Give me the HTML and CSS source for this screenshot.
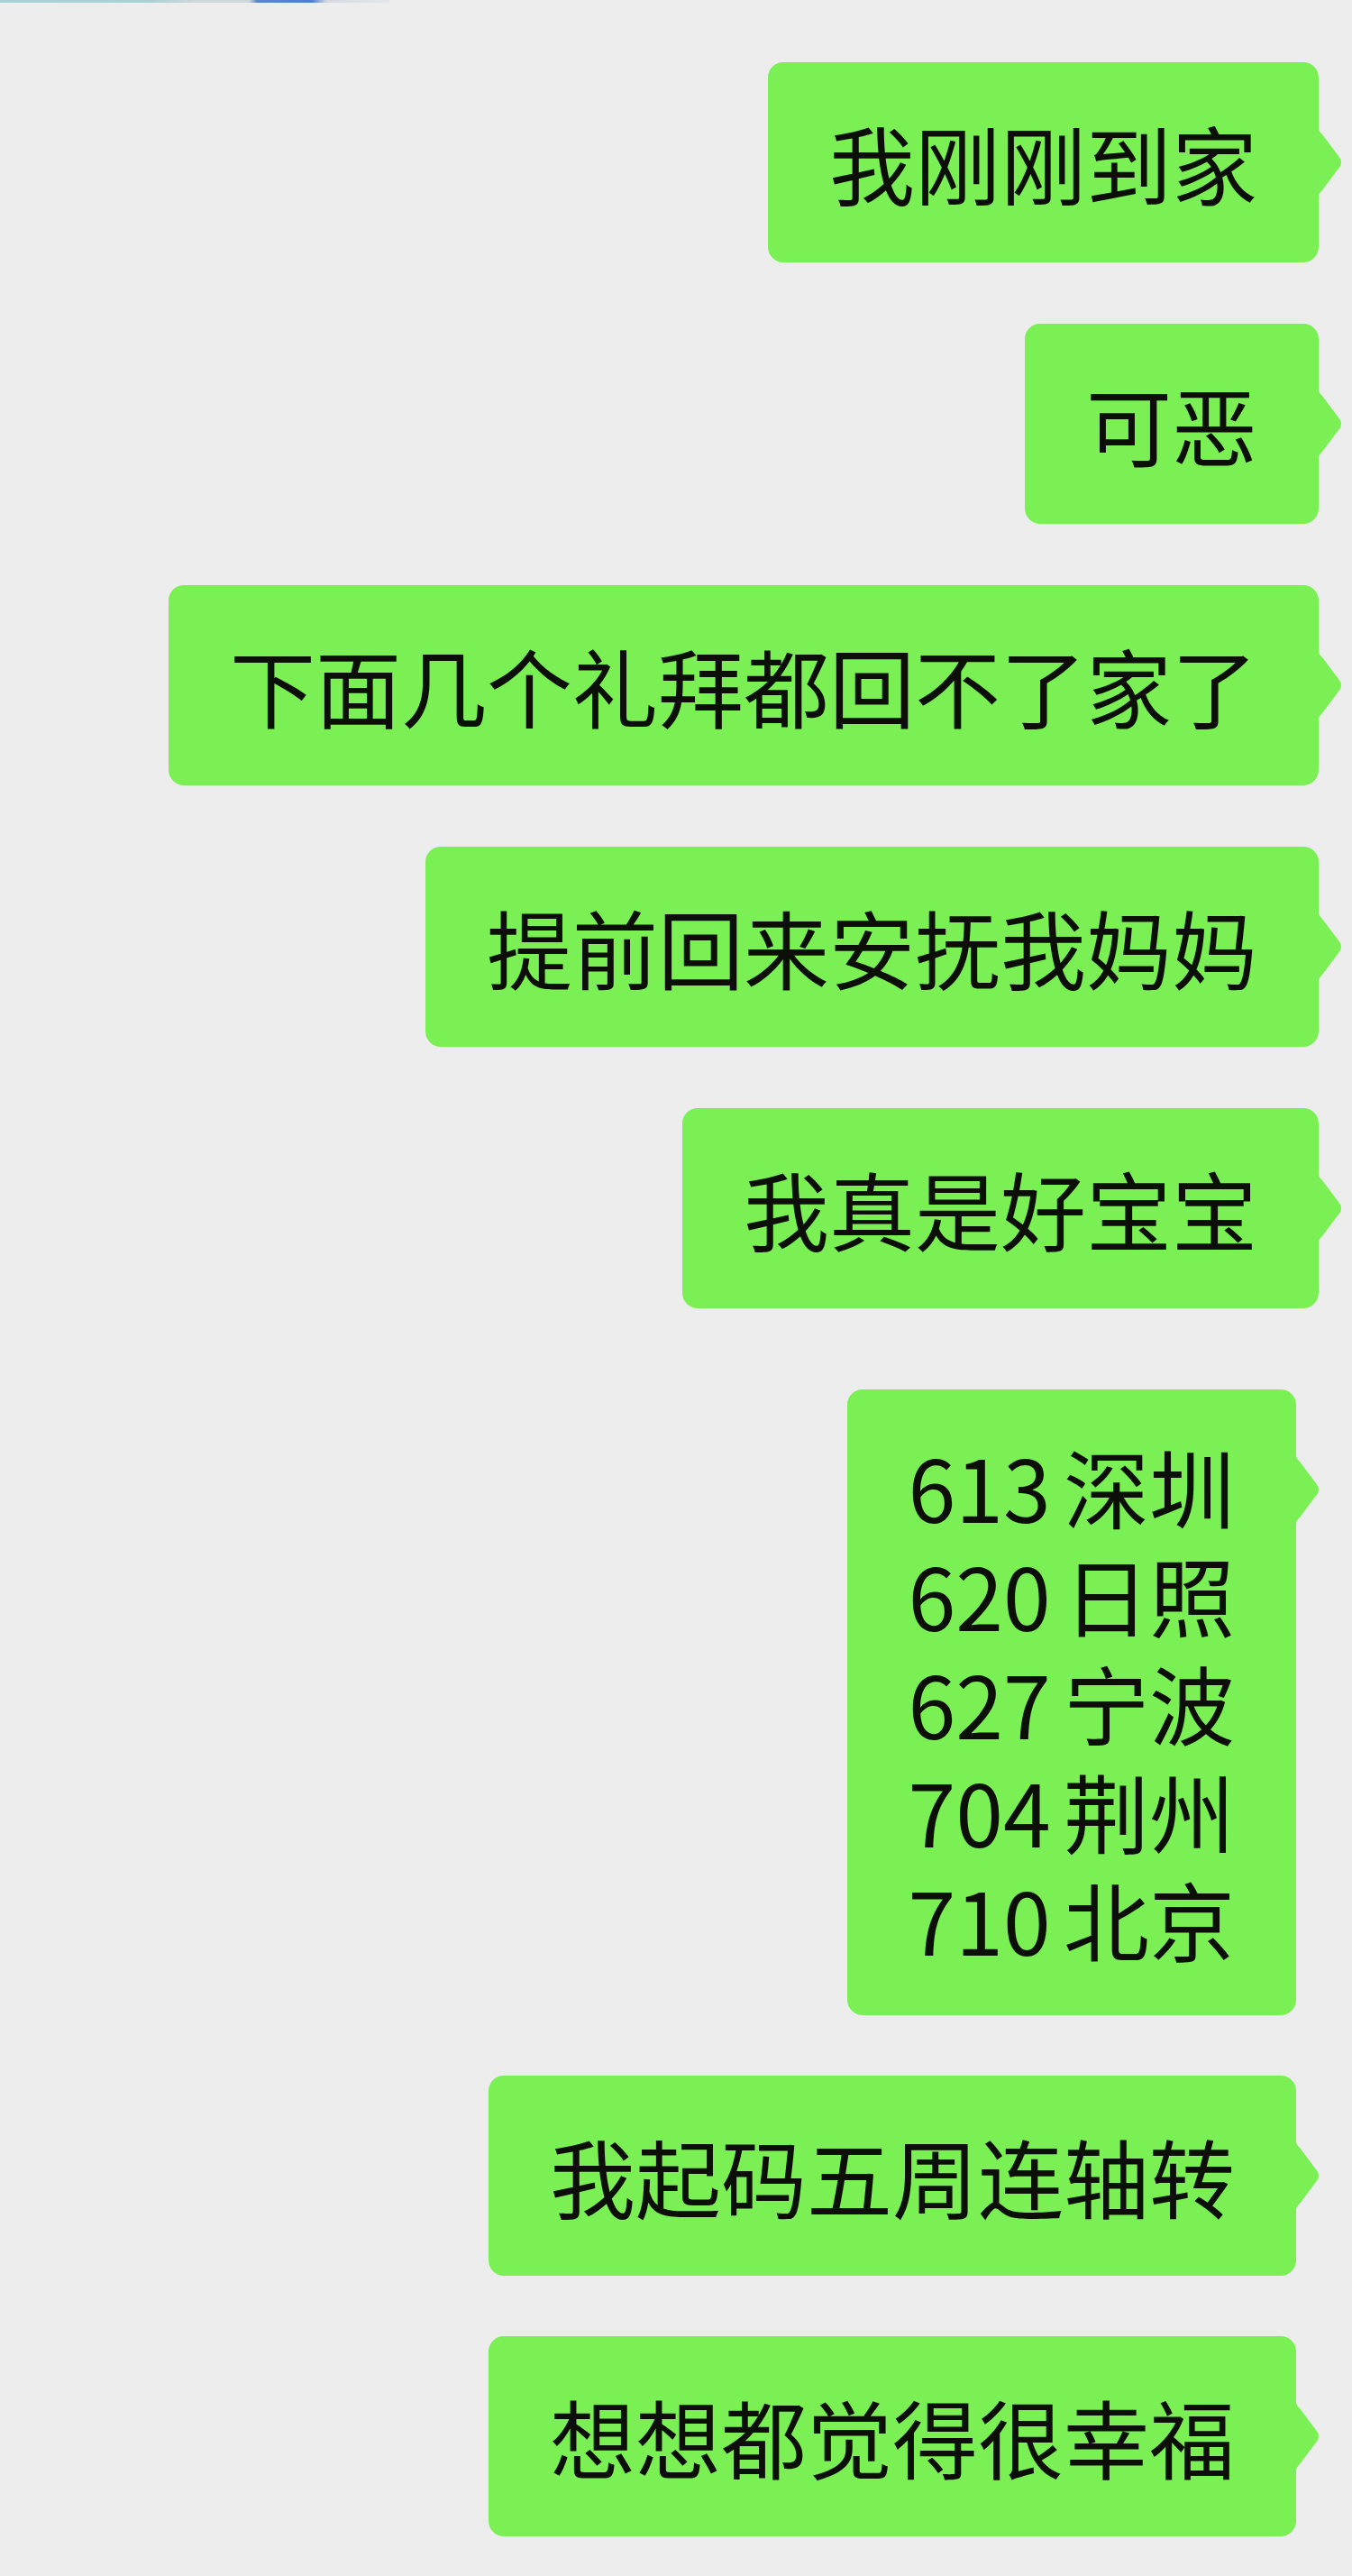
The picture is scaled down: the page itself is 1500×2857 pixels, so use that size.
FILE: index.html
```html
<!DOCTYPE html>
<html lang="zh-CN">
<head>
    <meta charset="UTF-8">
    <meta name="viewport" content="width=device-width, initial-scale=1.0">
    <title>聊天记录</title>
    <link rel="stylesheet" href="styles.css">
</head>
<body>
    <div class="top-strip"></div>
    <main class="chat">
        <div class="bubble">我刚刚到家</div>
        <div class="bubble">可恶</div>
        <div class="bubble">下面几个礼拜都回不了家了</div>
        <div class="bubble">提前回来安抚我妈妈</div>
        <div class="bubble">我真是好宝宝</div>

        <div class="later">
            <div class="bubble list">613 深圳<br>620 日照<br>627 宁波<br>704 荆州<br>710 北京</div>
            <div class="bubble">我起码五周连轴转</div>
            <div class="bubble">想想都觉得很幸福</div>
        </div>
    </main>
</body>
</html>
```

FILE: styles.css
```css
body {
    margin: 0;
    background-color: #ededed;
    font-family: "Noto Sans CJK SC", "Noto Sans", sans-serif;
}
.top-strip {
    height: 3px;
    width: 432px;
    background: linear-gradient(to right, #a6d3d8 0%, #a9d2d6 38%, #cfd6dc 50%, #cfd6dc 64%, #5a86cc 66%, #4d7fd0 80%, #d6dadf 84%, #e4e6e8 100%);
}
.chat {
    display: flex;
    flex-direction: column;
    align-items: flex-end;
    gap: 68px;
    padding: 66px 37px 0 0;
}
.later {
    display: flex;
    flex-direction: column;
    align-items: flex-end;
    gap: 67px;
    margin-top: 22px;
    padding-right: 25px;
}
.bubble {
    position: relative;
    background-color: #7af055;
    border-radius: 17px;
    padding: 51px 68px;
    font-size: 95px;
    line-height: 120px;
    color: #0b0f08;
    white-space: nowrap;
}
.bubble.list {
    padding-top: 47px;
    padding-bottom: 47px;
    word-spacing: -7px;
}
.bubble::after {
    content: "";
    position: absolute;
    left: 100%;
    top: 74px;
    width: 28px;
    height: 74px;
    background-color: #7af055;
    clip-path: path('M0 0 C1 3 2 4 4 6 L22 30 Q28 37 22 44 L4 68 C2 70 1 71 0 74 Z');
}
```
